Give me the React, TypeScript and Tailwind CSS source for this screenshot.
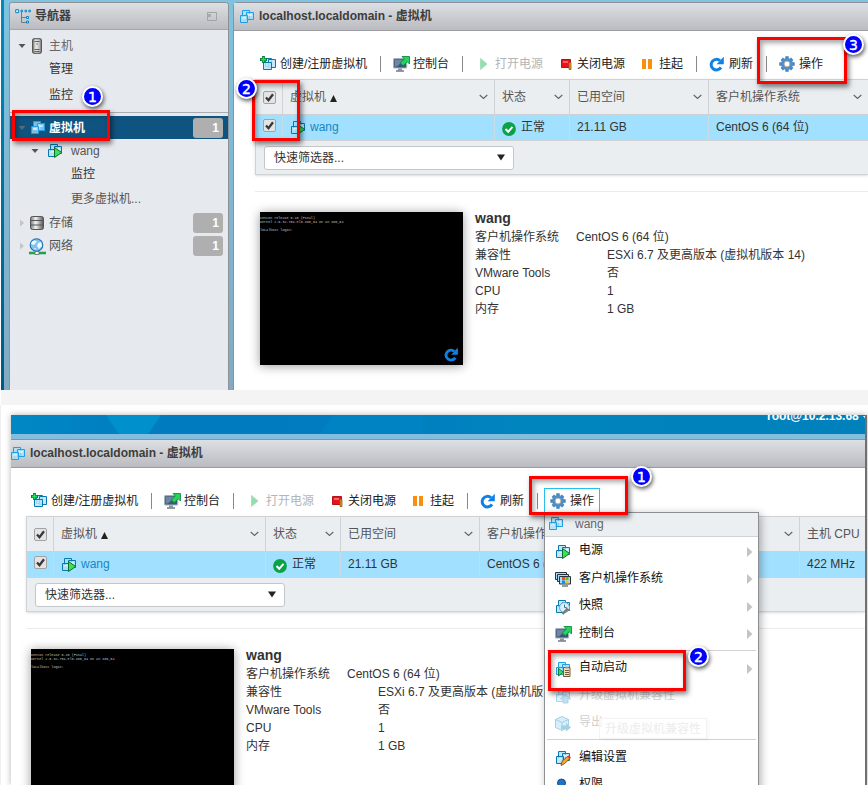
import React from "react";

const FONT = "font-['Liberation_Sans','Noto_Sans_CJK_SC',sans-serif]";

function VmIcon({ play = false, pale = false, children }: { play?: boolean; pale?: boolean; children?: React.ReactNode }) {
  const s = play || pale ? "#0878ae" : "#1f9fe6";
  return (
    <svg width="16" height="16" viewBox="0 0 16 16" className="shrink-0">
      <g stroke={s} fill="#a6e0f9" fillOpacity=".75">
        <path d="M3.500 1.500h7v8h-7z" />
        <path d="M7.500 3.500h7v7h-7z" />
        <path d="M1.500 6.500h7v7h-7z" />
      </g>
      <path d="M3 8h4v2H3zM9 5h4v2H9z" fill="#fff" opacity=".55" />
      {play && <path d="M7.500 4.500l7.200 5-7.200 5z" fill="#3ee05a" stroke="#08722c" />}
      {children}
    </svg>
  );
}

function CreateIcon() {
  return (
    <svg width="17" height="16" viewBox="0 0 17 16" className="shrink-0">
      <g stroke="#0878ae" fill="#b5e6fb" fillOpacity=".85">
        <path d="M5.500 2.500h6v8h-6z" />
        <path d="M8.500 3.500h7v8h-7z" />
        <path d="M3.500 6.500h8v7h-8z" />
      </g>
      <path d="M3.500 0v7M0 3.500h7" stroke="#067a3a" strokeWidth="2.800" />
      <path d="M3.500 1v5M1 3.500h5" stroke="#1fe05a" strokeWidth="1.400" />
    </svg>
  );
}

function ConsoleIcon() {
  return (
    <svg width="17" height="16" viewBox="0 0 17 16" className="shrink-0">
      <rect x=".6" y="2.600" width="13" height="9.400" rx="1" fill="#3c5676" stroke="#a3b1bd" strokeWidth="1.200" />
      <path d="M2 4h9L4 10.500H2z" fill="#6c86a3" />
      <path d="M5 12.500h4v2H5z" fill="#8797a5" />
      <path d="M3 15h8" stroke="#6b7b88" strokeWidth="1.500" />
      <path d="M9 .5h7.500V8l-2.300-2.300-4 4-2.800-2.800 4-4z" fill="#27d35c" stroke="#0a9140" strokeWidth=".9" />
    </svg>
  );
}

function RefreshIcon({ size = 16 }: { size?: number }) {
  return (
    <svg width={size} height={size} viewBox="0 0 16 16" className="shrink-0">
      <path d="M11 4.700A5.300 5.300 0 1 0 12 11.400" fill="none" stroke="#0f80e6" strokeWidth="3" />
      <path d="M14.800.8V8.300H7.600L10 5.800 12.600 3z" fill="#0f80e6" />
    </svg>
  );
}

function GearIcon() {
  return (
    <svg width="16" height="16" viewBox="0 0 16 16" className="shrink-0">
      <g stroke="#4585bd" strokeWidth="3.400">
        <path d="M8 .3v15.400M.3 8h15.400M2.800 2.800l10.400 10.400M13.200 2.800L2.800 13.200" />
      </g>
      <circle cx="8" cy="8" r="6" fill="#4d8fca" />
      <circle cx="8" cy="8" r="2.900" fill="#fff" stroke="#b3a58d" strokeWidth=".9" />
    </svg>
  );
}

function CheckBox() {
  return (
    <svg width="13" height="13" viewBox="0 0 13 13" className="shrink-0">
      <rect x=".5" y=".5" width="12" height="12" rx="1.500" fill="#e4e4e4" stroke="#a2a2a2" />
      <path d="M3 6.500l2.500 2.800L10 3.200" fill="none" stroke="#383838" strokeWidth="2.300" />
    </svg>
  );
}

function Chevron() {
  return (
    <svg width="9" height="6" viewBox="0 0 9 6" className="shrink-0">
      <path d="M.7 1l3.800 3.500L8.300 1" fill="none" stroke="#666" strokeWidth="1.200" />
    </svg>
  );
}

function Twisty({ open = false, dark = false }: { open?: boolean; dark?: boolean }) {
  return (
    <svg width="8" height="8" viewBox="0 0 8 8" className="shrink-0">
      {open ? <path d="M.5 2h7L4 6z" fill={dark ? "#5e6b72" : "#555"} /> : <path d="M2 .5v7L6 4z" fill="#c3c5c8" />}
    </svg>
  );
}

function Divider({ className }: { className: string }) {
  return <div className={`h-4 w-px shrink-0 bg-[#888] ${className}`} />;
}

function Toolbar({ active = false }: { active?: boolean }) {
  return (
    <div className="flex h-[25px] items-center whitespace-nowrap pl-[26px] text-[12px] text-[#222]">
      <div className="flex w-[120px] shrink-0 items-center gap-[3px]"><CreateIcon />创建/注册虚拟机</div>
      <Divider className="mr-3" />
      <div className="flex w-[69px] shrink-0 items-center gap-[3px]"><ConsoleIcon />控制台</div>
      <Divider className="mr-[17px]" />
      <div className="flex w-[81px] shrink-0 items-center gap-[7px] text-[#b5b5b5]">
        <svg width="8" height="12" viewBox="0 0 8 12"><path d="M.5.5l6.500 5.500L.5 11.500z" fill="#8fe0ad" stroke="#a9dfbd" /></svg>打开电源
      </div>
      <div className="flex w-[81px] shrink-0 items-center gap-[5px]">
        <svg width="11" height="12" viewBox="0 0 11 12"><path d="M.5 1.500h9v8h-9z" fill="#e8141c" stroke="#b51218" /><path d="M2 3h5v2H2z" fill="#ff6262" /><path d="M8 4.500h2v7H8z" fill="#e49b28" stroke="#8a5a16" strokeWidth=".8" /></svg>关闭电源
      </div>
      <div className="flex w-[54px] shrink-0 items-center gap-[7px]">
        <svg width="10" height="10" viewBox="0 0 10 10"><path d="M0 0h4v10H0zM6 0h4v10H6z" fill="#f98f0c" /></svg>挂起
      </div>
      <Divider className="mr-3" />
      <div className="flex w-[57px] shrink-0 items-center gap-1"><RefreshIcon />刷新</div>
      <Divider className={active ? "mr-[6px]" : "mr-3"} />
      <div className={active ? "flex h-[25px] w-[56px] shrink-0 items-center gap-1 border border-b-0 border-[#24c3ee] pl-[5px]" : "flex shrink-0 items-center gap-1"}>
        <GearIcon />操作
      </div>
    </div>
  );
}

function HeadCell({ label, width, sorted = false }: { label: string; width: string; sorted?: boolean }) {
  return (
    <div className={`flex h-[34px] shrink-0 items-center justify-between border-l border-[#d0d3d6] pl-[7px] pr-[6px] text-[#555] ${width}`}>
      <span className="flex items-center gap-1 whitespace-nowrap">
        {label}
        {sorted && <svg width="7" height="7" viewBox="0 0 7 7" className="mt-[3px]"><path d="M3.500 0L7 7H0z" fill="#222" /></svg>}
      </span>
      <Chevron />
    </div>
  );
}

function Cell({ children, width }: { children?: React.ReactNode; width: string }) {
  return <div className={`flex h-[25px] shrink-0 items-center whitespace-nowrap border-l border-[#c9dbe4] pb-px pl-[7px] ${width}`}>{children}</div>;
}

function VmTable({ wide }: { wide: boolean }) {
  return (
    <div className="ml-[21px] border-y border-l border-[#d0d3d6] bg-[#eaeef1] text-[12px] text-[#333] shadow-sm">
      <div className="flex h-[35px] overflow-hidden border-b border-[#ccd2d6]">
        <div className="flex w-[26px] shrink-0 items-center justify-center"><CheckBox /></div>
        <HeadCell label="虚拟机" width="w-[212px]" sorted />
        <HeadCell label="状态" width="w-[75px]" />
        <HeadCell label="已用空间" width="w-[139px]" />
        <HeadCell label="客户机操作系统" width="w-[160px]" />
        {wide && <HeadCell label="" width="w-[160px]" />}
        {wide && <div className="flex h-[34px] items-center whitespace-nowrap border-l border-[#d0d3d6] pl-[7px] text-[#555]">主机 CPU</div>}
      </div>
      <div className="flex h-[26px] overflow-hidden border-b border-[#d0d3d6] bg-[#a2e0ff]">
        <div className="flex w-[26px] shrink-0 justify-center pt-[4px]"><CheckBox /></div>
        <Cell width="w-[212px]"><span className="mt-[2px] flex"><VmIcon play /></span><span className="ml-[4px] text-[#1588c2]">wang</span></Cell>
        <Cell width="w-[75px]">
          <svg width="14" height="14" viewBox="0 0 14 14" className="mt-[3px]"><circle cx="7" cy="7" r="6.900" fill="#0aa147" /><path d="M3.500 7l2.700 2.800 4.300-5" fill="none" stroke="#fff" strokeWidth="2" /></svg>
          <span className="ml-[5px]">正常</span>
        </Cell>
        <Cell width="w-[139px]">21.11 GB</Cell>
        <Cell width="w-[160px]">CentOS 6 (64 位)</Cell>
        {wide && <Cell width="w-[160px]" />}
        {wide && <Cell width="w-[70px]">422 MHz</Cell>}
      </div>
      <div className="h-[33px] pl-2 pt-[5px]">
        <div className="flex h-6 w-[250px] items-center justify-between rounded-[3px] border border-[#c3c7ca] bg-white pb-px pl-[9px] pr-[8px]">
          快速筛选器...
          <svg width="8" height="7" viewBox="0 0 8 7"><path d="M0 .5h8l-4 6z" fill="#222" /></svg>
        </div>
      </div>
    </div>
  );
}

const DETAILS = [
  ["客户机操作系统", "CentOS 6 (64 位)"],
  ["兼容性", "ESXi 6.7 及更高版本 (虚拟机版本 14)"],
  ["VMware Tools", "否"],
  ["CPU", "1"],
  ["内存", "1 GB"],
];

function VmPanel({ active = false, edge }: { active?: boolean; edge: string }) {
  return (
    <div className={`border-t border-[#8e9296] bg-white ${edge}`}>
      <div className="flex h-[28px] items-center gap-1 border-b border-[#9a9ca0] bg-linear-to-b from-[#dcdfe3] to-[#bbbcc1] pb-px pl-[5px] text-[12px] font-bold text-[#3d3d3d]">
        <span className="mt-[2px] flex"><VmIcon /></span>
        <span className="whitespace-nowrap">localhost.localdomain - 虚拟机</span>
      </div>
      <div className="pb-[3px] pt-5"><Toolbar active={active} /></div>
      <VmTable wide={active} />
      <div className="ml-[21px] mt-4 border-t border-[#ececec]" />
      <div className="flex pl-[26px] pt-5">
        <div className="flex h-[153px] w-[203px] shrink-0 flex-col justify-between bg-black shadow-[0_1px_10px_rgba(0,0,0,0.4)]">
          <div className="whitespace-pre pt-[4px] font-['Liberation_Mono',monospace] text-[3.4px] leading-[4.200px] text-[#c4c4c4]">
            <div>CentOS release 6.10 (Final)</div>
            <div>Kernel 2.6.32-754.el6.x86_64 on an x86_64</div>
            <div className="mt-[4px]">localhost login:</div>
          </div>
          <div className="flex justify-end pb-[3px] pr-[4px]"><RefreshIcon size={15} /></div>
        </div>
        <div className="ml-3 mt-[-3px] whitespace-nowrap text-[12px] text-[#333]">
          <div className="h-[19px] text-[14px] font-bold leading-[18px]">wang</div>
          {DETAILS.map(([k, v], i) => (
            <div key={k} className="flex h-[18px] leading-[18px]">
              <span className={i === 0 ? "w-[101px]" : "w-[132px]"}>{k}</span>
              <span>{v}</span>
            </div>
          ))}
        </div>
      </div>
    </div>
  );
}

function Count() {
  return <span className="mr-[5px] flex h-5 w-[30px] items-center justify-end rounded-[3px] bg-[#afafaf] pr-1 font-bold text-white">1</span>;
}

function Navigator() {
  return (
    <div className="w-[220px] shrink-0 rounded-t-[4px] border border-b-0 border-[#8e9296] bg-[#e6e9ee] text-[12px] text-[#333]">
      <div className="flex h-[27px] items-center rounded-t-[3px] border-b border-[#a5a7ab] bg-linear-to-b from-[#dcdfe3] to-[#bbbcc1] pl-[5px] pr-[11px] font-bold text-[#3d3d3d]">
        <svg width="17" height="15" viewBox="0 0 17 15">
          <path d="M6.500 3v10.500H11M6.500 8.500H11" fill="none" stroke="#777b80" />
          <g fill="#d5f3ff" stroke="#0086ca"><path d="M.7.700h3v3h-3z" /><path d="M6 1.200h1.600v1.600H6zM10 1.200h1.600v1.600H10zM13.800 1.200h1.600v1.600h-1.600zM11.500 7.500h2v2h-2zM11.500 12h2v2h-2z" /></g>
        </svg>
        <span className="ml-[3px] flex-1">导航器</span>
        <svg width="10" height="9" viewBox="0 0 10 9"><path d="M.5.500h9v8h-9z" fill="none" stroke="#a2a4a7" /><path d="M1 2h3v3H1z" fill="#aaa" /></svg>
      </div>
      <div className="flex h-[30px] items-center pl-2 pt-px">
        <Twisty open />
        <svg width="10" height="16" viewBox="0 0 10 16" className="ml-[6px]">
          <defs><linearGradient id="tower"><stop stopColor="#888" /><stop offset=".4" stopColor="#eee" /><stop offset="1" stopColor="#999" /></linearGradient></defs>
          <rect x=".7" y=".7" width="8.600" height="14.600" rx="1.500" fill="url(#tower)" stroke="#444" strokeWidth="1.100" /><path d="M2.500 3.500h5M2.500 11.500h5M2.500 13.500h5" stroke="#444" strokeWidth=".8" /><path d="M4.500 6h1" stroke="#222" />
        </svg>
        <span className="ml-[7px] text-[#666]">主机</span>
      </div>
      <div className="flex h-[20px] items-center pb-[2px] pl-[39px]">管理</div>
      <div className="flex h-[32px] items-center pb-[2px] pl-[39px]">监控</div>
      <div className="mb-[3px] border-t border-[#a9acb0]" />
      <div className="flex h-[23px] items-center bg-[#0f5480] pl-2">
        <Twisty open dark />
        <span className="ml-[4px] flex"><VmIcon /></span>
        <span className="ml-[3px] flex-1 font-bold text-white">虚拟机</span>
        <Count />
      </div>
      <div className="flex h-[24px] items-center pl-[21px] text-[#555]"><Twisty open /><span className="ml-[8px] mr-[8px]"><VmIcon play /></span>wang</div>
      <div className="flex h-[22px] items-center pl-[61px]">监控</div>
      <div className="flex h-[27px] items-center pl-[61px] text-[#555]">更多虚拟机...</div>
      <div className="flex h-[23px] items-center pb-px pl-2 text-[#555]">
        <Twisty />
        <svg width="14" height="14" viewBox="0 0 14 14" className="ml-[4px] mr-[5px]"><defs><linearGradient id="drive"><stop stopColor="#777" /><stop offset=".4" stopColor="#f4f4f4" /><stop offset="1" stopColor="#555" /></linearGradient></defs><rect x=".5" y=".5" width="13" height="13" rx="2" fill="url(#drive)" stroke="#555" /><path d="M1 4.500h12M1 9h12" stroke="#555" /></svg>
        <span className="flex-1">存储</span><Count />
      </div>
      <div className="flex h-[23px] items-center pb-px pl-2 text-[#555]">
        <Twisty />
        <svg width="17" height="17" viewBox="0 0 17 17" className="ml-[3px] mr-[3px]"><circle cx="7.500" cy="7" r="6.300" fill="#7fc2f2" stroke="#216eb0" strokeWidth="1.100" /><path d="M3 3.500q3-2 5 0L5 7 2 6zM9 5l3-1 1 4-3 3-2-3zM5 10l2 0-1 2z" fill="#edf8ff" /><path d="M0 15h17" stroke="#18a84a" strokeWidth="2.600" /><path d="M6 13.500h4v3H6z" fill="#f2f2f2" stroke="#666" strokeWidth=".8" /></svg>
        <span className="flex-1">网络</span><Count />
      </div>
    </div>
  );
}

function GuestIcon() {
  return (
    <svg width="17" height="16" viewBox="0 0 17 16">
      <g fill="#a9dcf5" stroke="#27343e"><path d="M.5 1.500h11v7H.5z" /><path d="M2.500 3.500h11v7h-11z" /><path d="M4.500 5.500h11v7.500h-11z" /></g>
      <path d="M7 6h3v3H7z" fill="#f4511e" /><path d="M10.500 6h3v3h-3z" fill="#65b930" /><path d="M7 9.500h3v3H7z" fill="#198bda" /><path d="M10.500 9.500h3v3h-3z" fill="#f8bd1c" />
      <path d="M7 15h6" stroke="#999" strokeWidth="2" />
    </svg>
  );
}

const pencil = <g><path d="M6 15.500l1-4.200L13 6l2 2.500-6 5.500z" fill="#f9a52a" stroke="#70481b" strokeWidth=".8" /><path d="M12.300 6.700L14 5.300l2 2.200-1.700 1.500z" fill="#e93b35" /></g>;

function SnapshotIcon() {
  return (
    <VmIcon pale>
      <circle cx="9.500" cy="8.500" r="5" fill="#d8effa" stroke="#65a7cc" />
      <path d="M9.500 5.500v3h2" fill="none" stroke="#3c7ba1" />
      <path d="M7.500 15l4.500-4.500" stroke="#777" strokeWidth="2.400" />
      <path d="M11.500 8.500q0 3 3.500 2.500" fill="none" stroke="#777" strokeWidth="1.800" />
    </VmIcon>
  );
}

function AutoStartIcon() {
  return (
    <VmIcon>
      <path d="M3.500 7.500l5 3.700-5 3.700z" fill="#3ee05a" stroke="#08722c" strokeWidth=".9" />
      <path d="M8.500 6.500h6.500v9H8.500z" fill="#efe0be" stroke="#725b36" />
      <path d="M10.500 5.500h3v2h-3z" fill="#999" /><path d="M10 9.500h4M10 11.500h4M10 13.500h4" stroke="#725b36" />
    </VmIcon>
  );
}

function UpgradeIcon() {
  return <span className="flex opacity-40"><VmIcon><path d="M10.500 6l5 5h-2.500v4h-5v-4H5.500z" fill="#63b9e8" stroke="#2186bb" strokeWidth=".8" /></VmIcon></span>;
}

function ExportIcon() {
  return (
    <svg width="16" height="16" viewBox="0 0 16 16" opacity=".45">
      <path d="M.5 3.500L7 .5l6.500 3v8L7 14.500l-6.500-3z" fill="#a8dcf4" stroke="#3997c6" />
      <path d="M.5 3.500L7 6.500l6.500-3M7 6.500v8" fill="none" stroke="#3997c6" />
      <path d="M6 9.500h5V7l5 4.500-5 4V13H6z" fill="#3997c6" />
    </svg>
  );
}

function PersonIcon() {
  return <svg width="16" height="16" viewBox="0 0 16 16"><path d="M2 15q0-6 5.500-6t6.500 6z" fill="#4f9ad0" /><circle cx="6.500" cy="5" r="4" fill="#1f72c4" stroke="#164c90" /></svg>;
}

function MenuItem({ icon, label, arrow = false, disabled = false }: { icon: React.ReactNode; label: string; arrow?: boolean; disabled?: boolean }) {
  return (
    <div className={`flex h-[27.5px] items-center pl-[10px] pr-[5px] ${disabled ? "text-[#d0d0d0]" : "text-[#111]"}`}>
      <span className="flex w-6 pt-[3px]">{icon}</span>
      <span className="flex-1">{label}</span>
      {arrow && <svg width="6" height="10" viewBox="0 0 6 10" className="mt-[3px]"><path d="M0 0l5.500 5L0 10z" fill="#c4c4c4" /></svg>}
    </div>
  );
}

function ActionMenu() {
  return (
    <div className="absolute left-[544px] top-[512px] h-[290px] w-[215px] border border-[#8c8f92] bg-white text-[12px] shadow-[2px_2px_8px_rgba(0,0,0,0.3)]">
      <div className="flex h-[23.5px] items-center border-b border-[#d0d3d6] bg-[#eceff2] pl-[3px] text-[#666]"><VmIcon /><span className="ml-[11px]">wang</span></div>
      <MenuItem icon={<VmIcon play />} label="电源" arrow />
      <MenuItem icon={<GuestIcon />} label="客户机操作系统" arrow />
      <MenuItem icon={<SnapshotIcon />} label="快照" arrow />
      <MenuItem icon={<ConsoleIcon />} label="控制台" arrow />
      <div className="mx-[2px] mb-[3px] mt-[3px] border-t border-[#d2d2d2]" />
      <MenuItem icon={<AutoStartIcon />} label="自动启动" arrow />
      <MenuItem icon={<UpgradeIcon />} label="升级虚拟机兼容性" disabled />
      <MenuItem icon={<ExportIcon />} label="导出" disabled />
      <div className="mx-[2px] mb-[3px] mt-[3px] border-t border-[#d2d2d2]" />
      <MenuItem icon={<VmIcon pale>{pencil}</VmIcon>} label="编辑设置" />
      <MenuItem icon={<PersonIcon />} label="权限" />
      <div className="absolute left-[54px] top-[205px] flex h-[21px] w-[108px] items-center border border-[#f3f3f3] bg-white/70 pl-[5px] text-[#ececec] shadow-[2px_2px_3px_rgba(0,0,0,0.03)]">升级虚拟机兼容性</div>
    </div>
  );
}

function Highlight({ place }: { place: string }) {
  return <div className={`absolute border-[3px] border-[#fe0000] shadow-[2px_3px_5px_rgba(0,0,0,0.5),inset_2px_3px_5px_rgba(0,0,0,0.35)] ${place}`} />;
}

function Step({ n, place }: { n: number; place: string }) {
  return (
    <div className={`absolute flex h-[21px] w-[21px] items-center justify-center rounded-full border-2 border-white bg-[#0000fe] font-['DejaVu_Sans',sans-serif] text-[14px] leading-none text-white shadow-[1px_2px_4px_rgba(0,0,0,0.65)] [-webkit-text-stroke:0.4px_white] ${place}`}>{n}</div>
  );
}

export default function App() {
  return (
    <div className={`relative flex h-[785px] w-[868px] flex-col overflow-hidden bg-white ${FONT}`}>
      <section className="flex h-[390px] shrink-0 overflow-hidden pl-px">
        <div className="w-[3px] shrink-0 bg-linear-to-b from-[#008bbd] to-[#005a87]" />
        <div className="flex min-w-0 flex-1 bg-linear-to-b from-[#7fc3e0] to-[#82aac3] pl-[5px] pt-[2px]">
          <Navigator />
          <div className="ml-1 min-w-0 flex-1 overflow-hidden rounded-tl-[4px]">
            <VmPanel edge="h-[388px] border-l rounded-tl-[4px]" />
          </div>
        </div>
      </section>
      <div className="ml-px h-[15px] shrink-0 bg-[#f4f4f4]" />
      <section className="flex-1 border-l border-[#f0f0f0] pl-[10px] pt-[10px]">
        <div className="h-[370px] w-[856px] overflow-hidden border-r-2 border-[#707070] bg-white shadow-[0_0_6px_rgba(0,0,0,0.3)]">
          <div className="relative h-[19px] overflow-hidden bg-[#0083c0]">
            <svg width="854" height="19" className="absolute left-0 top-0">
              <defs><linearGradient id="banner"><stop stopColor="#0088c4" /><stop offset=".18" stopColor="#007bc0" /><stop offset=".4" stopColor="#007cc0" /><stop offset=".6" stopColor="#0085be" /><stop offset="1" stopColor="#0081bc" /></linearGradient></defs>
              <path d="M0 0h854v19H0z" fill="url(#banner)" />
              <path d="M95 0h55l-13 19h-29z" fill="#0090cb" />
              <path d="M322 0h90v19H309z" fill="#0083c3" />
            </svg>
            <div className="absolute left-[756px] top-[-6px] flex items-center whitespace-nowrap text-[12px] font-bold leading-[14px] text-white">
              root@10.2.13.68
              <svg width="7" height="4" viewBox="0 0 7 4" className="ml-[4px] mt-[3px]"><path d="M0 0h7L3.500 4z" fill="#fff" /></svg>
            </div>
          </div>
          <div className="h-[5px] bg-[#83bede]" />
          <div className="ml-[-7px]"><VmPanel active edge="h-[346px] border-l" /></div>
        </div>
      </section>
      <ActionMenu />
      <Highlight place="left-[12px] top-[110px] h-[31px] w-[98px]" />
      <Highlight place="left-[252px] top-[80px] h-[61px] w-[48px]" />
      <Highlight place="left-[757px] top-[37px] h-[47px] w-[90px]" />
      <Highlight place="left-[529px] top-[476px] h-[39px] w-[99px]" />
      <Highlight place="left-[548px] top-[650px] h-[41px] w-[138px]" />
      <Step n={1} place="left-[82px] top-[86px]" />
      <Step n={2} place="left-[236px] top-[78px]" />
      <Step n={3} place="left-[843px] top-[34px]" />
      <Step n={1} place="left-[631px] top-[466px]" />
      <Step n={2} place="left-[688px] top-[646px]" />
    </div>
  );
}
